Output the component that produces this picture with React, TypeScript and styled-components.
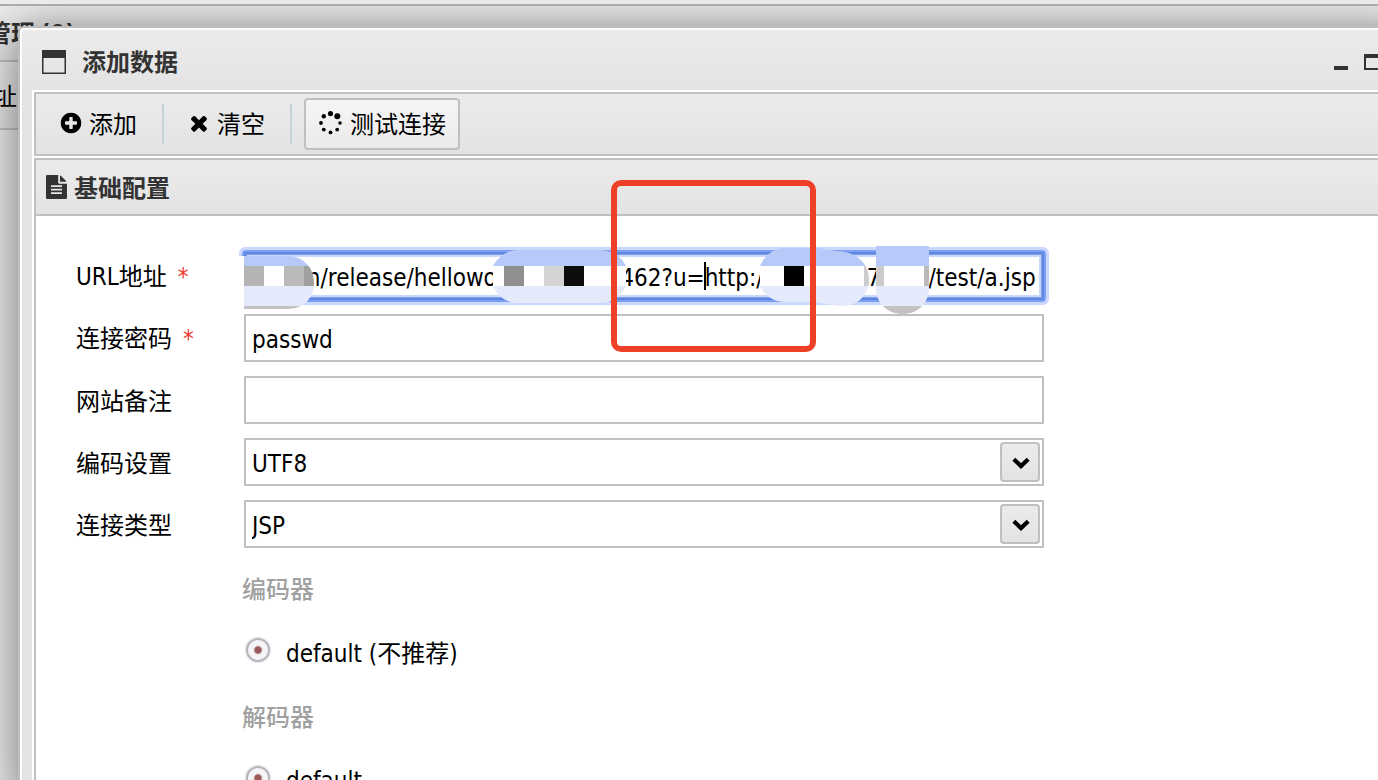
import React from "react";
import styled, { createGlobalStyle } from "styled-components";

const latin = `"DejaVu Sans Condensed", "Noto Sans CJK SC", sans-serif`;
const han = `"Noto Sans CJK SC", sans-serif`;
const line = "#c0c0c0";

const GlobalStyle = createGlobalStyle`
  *, *::before, *::after { box-sizing: border-box; }
  body { margin: 0; overflow: hidden; background: #ebebeb; }
  h1, h2 { margin: 0; }
`;

const Page = styled.div`
  position: relative;
  display: flex;
  flex-direction: column;
  height: 100vh;
  overflow: hidden;
  color: #000;
  font: 24px/32px ${han};
`;

const TopEdge = styled.div`
  position: relative;
  z-index: 2;
  height: 6px;
  background: #ebebeb;
  border-bottom: 2px solid #ababab;
`;

const BackBar = styled.div<{ $height: number; $indent: number; $bold?: boolean }>`
  display: flex;
  align-items: center;
  flex: none;
  height: ${(p) => p.$height}px;
  white-space: nowrap;
  text-indent: ${(p) => p.$indent}px;
  border-bottom: 2px solid ${line};
  background: linear-gradient(#ebebeb, #e3e3e3);
  color: ${(p) => (p.$bold ? "#333" : "#000")};
  font-weight: ${(p) => (p.$bold ? 700 : 400)};
`;

const BackBody = styled.div`
  flex: 1;
  background: #ebebeb;
`;

const Dialog = styled.section`
  position: absolute;
  top: 26px;
  left: 18px;
  right: -30px;
  bottom: -20px;
  display: flex;
  flex-direction: column;
  border: 2px solid #bdbdbd;
  border-radius: 6px 6px 0 0;
  background: linear-gradient(#ebebeb, #e3e3e3 66px);
  box-shadow: inset 0 0 0 2px #fff, 0 6px 48px rgba(0, 0, 0, 0.52);
  padding: 2px 12px;
`;

const TitleBar = styled.header`
  display: flex;
  align-items: center;
  flex: none;
  height: 60px;
  padding: 4px 0 0 10px;
  color: #333;
`;

const Title = styled.h1`
  flex: 1;
  margin-left: 16px;
  padding-bottom: 2px;
  font: 700 24px/32px ${han};
`;

const WindowButton = styled.button`
  display: flex;
  width: 30px;
  height: 24px;
  padding: 0;
  border: 0;
  background: none;
`;

const Frame = styled.div`
  display: flex;
  flex-direction: column;
  flex: 1;
  min-height: 0;
  background: #fff;
  padding: 2px;
  gap: 2px;
`;

const Toolbar = styled.div`
  display: flex;
  align-items: center;
  flex: none;
  height: 64px;
  border: 2px solid ${line};
  background: linear-gradient(#ebebeb, #e3e3e3);
`;

const ToolButton = styled.button<{ $raised?: boolean }>`
  display: flex;
  align-items: center;
  height: 52px;
  gap: ${(p) => (p.$raised ? 8 : 6)}px;
  margin-left: ${(p) => (p.$raised ? 12 : 0)}px;
  padding: ${(p) => (p.$raised ? "0 12px 2px" : "0 23px 2px 21px")};
  border: 2px solid ${(p) => (p.$raised ? line : "transparent")};
  border-radius: 4px;
  background: ${(p) => (p.$raised ? "linear-gradient(#f5f5f5, #ebebeb)" : "none")};
  color: #000;
  font: 24px/32px ${han};
`;

const Separator = styled.span`
  width: 2px;
  height: 40px;
  background: #c5d3d8;
`;

const Panel = styled.div`
  flex: 1;
  min-height: 0;
  border: 2px solid ${line};
  background: #fff;
`;

const PanelHeader = styled.div`
  display: flex;
  align-items: center;
  gap: 7px;
  height: 56px;
  padding-left: 10px;
  border-bottom: 2px solid ${line};
  background: linear-gradient(#ebebeb, #e3e3e3);
  color: #333;
`;

const PanelTitle = styled.h2`
  font: 700 24px/32px ${han};
`;

const Form = styled.form`
  display: flex;
  flex-direction: column;
  gap: 14px;
  padding: 36px 40px 0;
`;

const Row = styled.div`
  display: flex;
  align-items: center;
`;

const Label = styled.label`
  width: 168px;
  flex: none;
  white-space: nowrap;
`;

const Latin = styled.span`
  font-family: ${latin};
`;

const Required = styled.span`
  margin-left: 11px;
  color: #f0382b;
  font-family: ${latin};
`;

const Field = styled.div`
  position: relative;
  width: 800px;
`;

const TextInput = styled.input<{ $focused?: boolean }>`
  display: block;
  width: 100%;
  height: 48px;
  padding: 4px 6px 0;
  border: 2px solid ${(p) => (p.$focused ? "#6087df" : line)};
  border-radius: 0;
  outline: 0;
  background: #fff;
  color: #000;
  font: 24px/32px ${latin};
  ${(p) =>
    p.$focused &&
    `border-radius: 2px;
     box-shadow: inset 0 0 0 1px #7c9ff2, inset 0 0 0 3px #c9d8fb,
       0 0 0 2px #7c9ff2, 0 0 0 5px #c9d8fb;`}
`;

const Select = styled.select`
  display: block;
  width: 100%;
  height: 48px;
  padding: 4px 6px 0;
  appearance: none;
  border: 2px solid ${line};
  border-radius: 0;
  background: #fff;
  color: #000;
  font: 24px/32px ${latin};
`;

const DropMark = styled.span`
  position: absolute;
  top: 4px;
  right: 4px;
  display: flex;
  align-items: center;
  justify-content: center;
  width: 40px;
  height: 40px;
  padding: 2px 0 0 2px;
  border: 2px solid ${line};
  border-radius: 4px;
  background: linear-gradient(#ebebeb, #e3e3e3);
  pointer-events: none;
`;

const Mosaic = styled.svg`
  position: absolute;
  top: -12px;
  left: -8px;
  pointer-events: none;
`;

const Highlight = styled.div`
  position: absolute;
  z-index: 3;
  top: -72px;
  left: 367px;
  width: 205px;
  height: 172px;
  border: 6px solid #ee4027;
  border-radius: 10px;
  pointer-events: none;
`;

const Group = styled.fieldset`
  min-width: 0;
  margin: 0 0 0 166px;
  padding: 26px 0 0;
  border: 0;
`;

const Legend = styled.legend`
  padding: 10px 0 0;
  color: #a0a0a0;
  font-weight: 500;
`;

const Choice = styled.label`
  display: flex;
  align-items: center;
  gap: 16px;
  height: 46px;
  padding-left: 4px;
`;

const Radio = styled.input`
  appearance: none;
  width: 24px;
  height: 24px;
  margin: 0 0 6px;
  border: 2px solid #b9b4b8;
  border-radius: 50%;
  background: radial-gradient(circle, #9a5a5a 0 3px, #d8c4c4 4px, #f4f5f7 5px);
  box-shadow: 0 0 1px 1px #d9e4ee;
`;

const plus =
  "M1344 960v-128q0-26-19-45t-45-19h-256v-256q0-26-19-45t-45-19h-128q-26 0-45 19t-19 45v256h-256q-26 0-45 19t-19 45v128q0 26 19 45t45 19h256v256q0 26 19 45t45 19h128q26 0 45-19t19-45v-256h256q26 0 45-19t19-45zm320-64q0 209-103 385.5t-279.5 279.5-385.5 103-385.5-103-279.5-279.5-103-385.5 103-385.5 279.5-279.5 385.5-103 385.5 103 279.5 279.5 103 385.5z";
const times =
  "M1490 1322q0 40-28 68l-136 136q-28 28-68 28t-68-28l-294-294-294 294q-28 28-68 28t-68-28l-136-136q-28-28-28-68t28-68l294-294-294-294q-28-28-28-68t28-68l136-136q28-28 68-28t68 28l294 294 294-294q28-28 68-28t68 28l136 136q28 28 28 68t-28 68l-294 294 294 294q28 28 28 68z";

const Glyph = ({ d }: { d: string }) => (
  <svg width="24" height="24" viewBox="0 0 1792 1792" aria-hidden>
    <path d={d} />
  </svg>
);

const Spinner = () => (
  <svg width="24" height="24" aria-hidden>
    <circle cx="12.5" cy="2.6" r="2.6" />
    <circle cx="19.3" cy="5.2" r="3" />
    <circle cx="22" cy="12" r="1.8" />
    <circle cx="19.2" cy="18.6" r="1.9" />
    <circle cx="12.5" cy="21.4" r="1.9" />
    <circle cx="5.8" cy="18.6" r="1.9" />
    <circle cx="3" cy="12" r="1.9" />
    <circle cx="5.8" cy="5.2" r="2.2" />
  </svg>
);

const WindowIcon = () => (
  <svg width="24" height="24" fill="#333" aria-hidden>
    <path d="M0 0H24V24H0ZM1.5 8V22.5H22.5V8Z" fillRule="evenodd" />
  </svg>
);

const FileIcon = () => (
  <svg width="21" height="24" fill="#333" aria-hidden>
    <path
      fillRule="evenodd"
      d="M1.2 0H12.2V7.5Q12.2 8.7 13.4 8.7H21V22.8Q21 24 19.8 24H1.2Q0 24 0 22.8V1.2Q0 0 1.2 0ZM5 10.3V12H16V10.3ZM5 13.8V15.5H16V13.8ZM5 17.2V18.9H16V17.2Z"
    />
    <path d="M14 .4V6.8H20.5Q20.2 6 19.6 5.4L15.4 1.2Q14.8 .6 14 .4Z" />
  </svg>
);

const Chevron = () => (
  <svg width="18" height="12" aria-hidden>
    <path d="M1.8 2.2L9 9L16.2 2.2" fill="none" stroke="#000" strokeWidth="4.2" />
  </svg>
);

const UrlMosaic = () => (
  <Mosaic width="820" height="80" viewBox="236 240 820 80" aria-hidden>
    <defs>
      <clipPath id="blobs">
        <path d="M244 256H287C304 256 314 268 314 283C314 298 304 309 287 309H244Z" />
        <path d="M493 266C499 255 509 250 518 250H600C611 250 621 256 626 266V286C621 297 612 303 600 303H518C507 303 498 297 493 286Z" />
        <path d="M760 266C765 254 775 248 786 248H818L836 251C854 251 869 262 869 279C869 295 858 306 842 306Q834 306 828 304L815 302H786C774 302 765 296 760 286Z" />
        <path d="M876 246H929V288C929 304 917 314 903 314C888 314 876 304 876 288Z" />
      </clipPath>
    </defs>
    <path d="M236 256H244V310H236Z" fill="#fff" />
    <g clipPath="url(#blobs)">
      <path d="M240 246H940V266H240Z" fill="#b6c9f8" />
      <path d="M240 266H940V286H240Z" fill="#fff" />
      <path d="M240 286H940V306H240Z" fill="#e4eafc" />
      <path d="M240 306H940V316H240Z" fill="#c2c2c2" />
      <path d="M244 266h20v20h-20z" fill="#b4b4b4" />
      <path d="M284 266h20v20h-20z" fill="#b9b9b9" />
      <path d="M304 266h10v20h-10z" fill="#a0a0a0" />
      <path d="M504 266h20v20h-20z" fill="#8f8f8f" />
      <path d="M544 266h20v20h-20z" fill="#d4d4d4" />
      <path d="M564 266h20v20h-20z" fill="#0c0c0c" />
      <path d="M784 266h20v20h-20z" fill="#000" />
      <path d="M864 266h8v20h-8zM876 266h8v20h-8z" fill="#ccc" />
      <path d="M924 266h5v20h-5z" fill="#bababa" />
    </g>
    <path d="M704 262h2v28h-2z" />
  </Mosaic>
);

/* The runs of spaces lie under the mosaic patches. */
const url = [
  " ".repeat(8),
  "n/release/hellowo",
  " ".repeat(18),
  "462?u=http://",
  " ".repeat(14),
  "7",
  " ".repeat(7),
  "/test/a.jsp",
].join("");

const selects = [
  { id: "encode", label: "编码设置", value: "UTF8" },
  { id: "type", label: "连接类型", value: "JSP" },
];

export default function App() {
  return (
    <Page>
      <GlobalStyle />
      <TopEdge />
      <BackBar $height={56} $indent={-13} $bold>
        <span>管理 <Latin>(0)</Latin></span>
      </BackBar>
      <BackBar $height={68} $indent={-7}>址</BackBar>
      <BackBody />
      <Dialog>
        <TitleBar>
          <WindowIcon />
          <Title>添加数据</Title>
          <WindowButton aria-label="最小化">
            <svg width="30" height="24" aria-hidden>
              <path d="M0 16h14v4H0z" fill="#333" />
            </svg>
          </WindowButton>
          <WindowButton aria-label="最大化">
            <svg width="30" height="24" aria-hidden>
              <path d="M0 4H20V20H0ZM2 8V18H18V8Z" fill="#333" fillRule="evenodd" />
            </svg>
          </WindowButton>
        </TitleBar>
        <Frame>
          <Toolbar>
            <ToolButton><Glyph d={plus} />添加</ToolButton>
            <Separator />
            <ToolButton><Glyph d={times} />清空</ToolButton>
            <Separator />
            <ToolButton $raised><Spinner />测试连接</ToolButton>
          </Toolbar>
          <Panel>
            <PanelHeader>
              <FileIcon />
              <PanelTitle>基础配置</PanelTitle>
            </PanelHeader>
            <Form>
              <Row>
                <Label htmlFor="url"><Latin>URL</Latin>地址<Required>*</Required></Label>
                <Field>
                  <TextInput id="url" $focused defaultValue={url} />
                  <UrlMosaic />
                  <Highlight />
                </Field>
              </Row>
              <Row>
                <Label htmlFor="pwd">连接密码<Required>*</Required></Label>
                <Field><TextInput id="pwd" defaultValue="passwd" /></Field>
              </Row>
              <Row>
                <Label htmlFor="note">网站备注</Label>
                <Field><TextInput id="note" /></Field>
              </Row>
              {selects.map((s) => (
                <Row key={s.id}>
                  <Label htmlFor={s.id}>{s.label}</Label>
                  <Field>
                    <Select id={s.id}><option>{s.value}</option></Select>
                    <DropMark><Chevron /></DropMark>
                  </Field>
                </Row>
              ))}
              <Group>
                <Legend>编码器</Legend>
                <Choice>
                  <Radio type="radio" name="encoder" defaultChecked />
                  <span><Latin>default (</Latin>不推荐<Latin>)</Latin></span>
                </Choice>
              </Group>
              <Group>
                <Legend>解码器</Legend>
                <Choice>
                  <Radio type="radio" name="decoder" defaultChecked />
                  <Latin>default</Latin>
                </Choice>
              </Group>
            </Form>
          </Panel>
        </Frame>
      </Dialog>
    </Page>
  );
}
